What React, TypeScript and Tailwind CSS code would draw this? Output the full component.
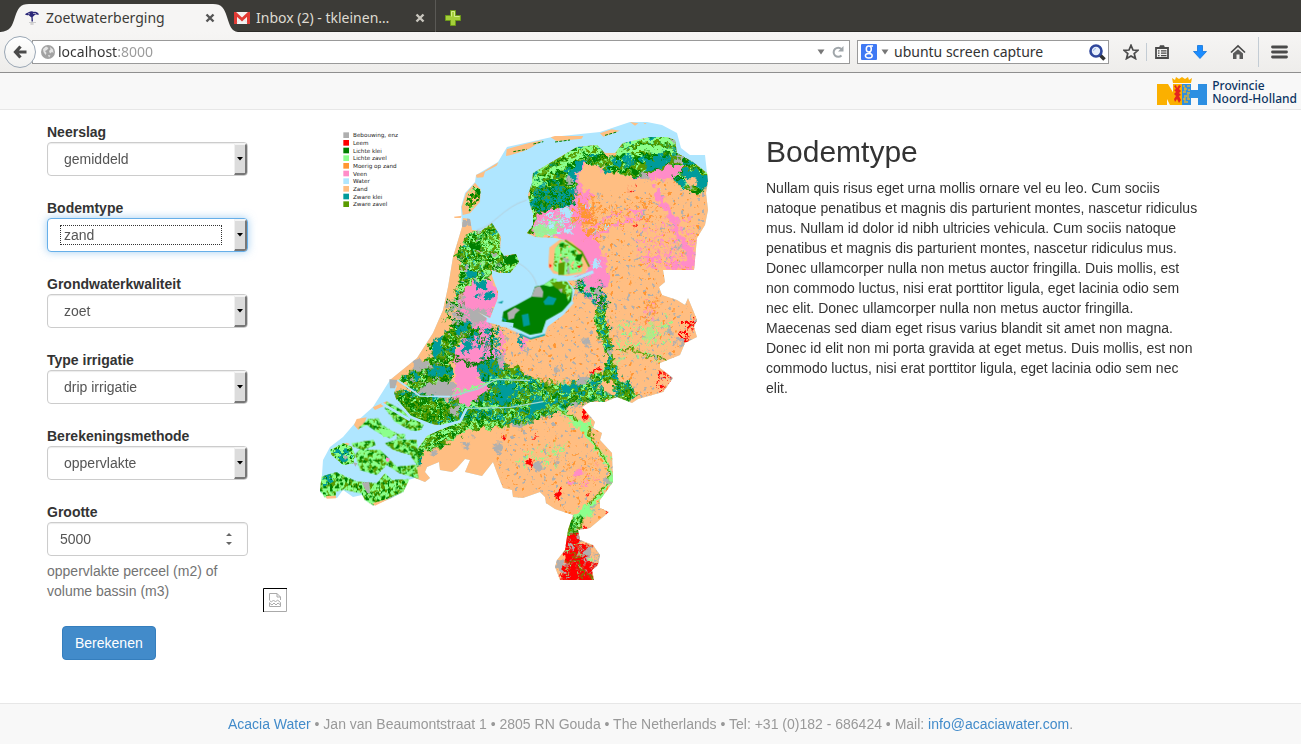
import React from "react";

const C = {
  grey: "#afafaf",
  red: "#ff0000",
  green: "#008000",
  light: "#8cff8c",
  orange: "#ff9632",
  pink: "#ff8cc8",
  water: "#afe6ff",
  sand: "#ffbe82",
  teal: "#009b9b",
  olive: "#5a9b00",
};

const legend = [
  ["Bebouwing, enz", C.grey],
  ["Leem", C.red],
  ["Lichte klei", C.green],
  ["Lichte zavel", C.light],
  ["Moerig op zand", C.orange],
  ["Veen", C.pink],
  ["Water", C.water],
  ["Zand", C.sand],
  ["Zware klei", C.teal],
  ["Zware zavel", C.olive],
];

/* Noise masks: [id, frequency, octaves, seed, threshold] */
const noises: [string, string, number, number, number][] = [
  ["n-a", "0.08", 3, 3, 0.5],
  ["n-b", "0.09", 3, 11, 0.55],
  ["n-c", "0.08", 3, 27, 0.57],
  ["n-d", "0.1", 2, 41, 0.63],
  ["n-e", "0.07", 2, 58, 0.71],
  ["n-f", "0.03", 3, 73, 0.58],
  ["n-g", "0.02 0.09", 3, 90, 0.52],
  ["n-h", "0.08", 2, 134, 0.69],
];

type Layer = [string, string];

function Patch({ d, base, layers = [] }: { d: string; base?: string; layers?: Layer[] }) {
  return (
    <>
      {base && <path d={d} fill={base} />}
      {layers.map(([fill, noise]) => (
        <path key={fill + noise} d={d} fill={fill} filter={`url(#${noise})`} />
      ))}
    </>
  );
}

const clay: Layer[] = [[C.olive, "n-g"], [C.teal, "n-f"], [C.light, "n-d"]];
const zavel: Layer[] = [[C.olive, "n-a"], [C.green, "n-b"], [C.light, "n-c"]];
const river: Layer[] = [[C.olive, "n-a"], [C.green, "n-c"], [C.light, "n-d"]];
const sandy: Layer[] = [[C.orange, "n-e"], [C.grey, "n-h"]];

const silhouette =
  "M322 475L323 460L330 447L343 437L355 423L373 407L390 380L417 358L433 333L443 310L448 287L453 257L462 227L461 207L465 193L475 182L476 175L498 162L507 147L552 137L600 132L630 122L647 122L662 125L677 133L681 148L690 155L705 155L707 173L708 182L706 193L708 210L705 225L697 238L694 270L663 270L665 282L659 287L662 295L677 300L685 305L688 298L693 310L697 320L694 327L697 337L685 343L680 355L660 363L660 368L673 378L663 392L638 399L632 403L617 397L605 402L590 402L582 407L589 415L595 422L593 428L602 433L600 440L612 453L613 482L600 500L600 508L609 512L590 528L578 530L580 540L593 545L600 555L598 565L592 570L594 580L560 580L555 567L557 560L565 550L568 530L573 515L555 509L546 503L545 497L540 492L523 498L513 497L512 490L503 488L497 473L493 462L482 476L465 472L470 460L465 459L457 468L452 472L440 470L439 462L427 467L425 472L430 478L425 482L415 478L408 480L403 492L390 499L373 505L365 500L362 495L353 497L343 490L337 498L327 497L320 492Z";

const mainland =
  "M532 183L533 173L550 163L577 147L597 145L605 153L615 153L623 143L650 137L667 137L675 140L677 153L693 162L707 173L708 182L706 193L708 210L705 225L697 238L694 270L663 270L665 282L659 287L662 295L677 300L685 305L688 298L693 310L697 320L694 327L697 337L685 343L680 355L660 363L660 368L673 378L663 392L638 399L632 403L617 397L605 402L590 402L582 407L589 415L595 422L593 428L602 433L600 440L612 453L613 482L600 500L600 508L609 512L590 528L578 530L580 540L593 545L600 555L598 565L592 570L594 580L560 580L555 567L557 560L565 550L568 530L573 515L555 509L546 503L545 497L540 492L523 498L513 497L512 490L503 488L497 473L493 462L482 476L465 472L470 460L465 459L457 468L452 472L440 470L439 462L427 467L425 472L430 478L425 482L415 478L417 450L427 436L440 430L458 423L440 425L427 424L410 417L398 404L394 393L397 386L390 380L417 358L433 333L443 310L448 287L453 257L462 227L463 218L470 219L472 230L481 231L492 223L501 237L500 250L504 256L516 254L519 262L510 273L500 273L492 270L492 276L498 292L497 300L490 318L478 312L492 322L502 327L512 325L527 334L542 337L547 327L562 316L572 303L575 290L567 280L583 273L588 270L580 250L566 240L555 238L535 237L527 233L533 225L533 213L530 205L528 195Z";

function SoilMap() {
  return (
    <svg viewBox="-141 0 1464 1434" className="block h-auto w-full" role="img" aria-label="Bodemkaart van Nederland">
      <defs>
        {noises.map(([id, freq, oct, seed, t]) => (
          <filter key={id} id={id} x="0" y="0" width="1" height="1" colorInterpolationFilters="sRGB">
            <feTurbulence type="fractalNoise" baseFrequency={freq} numOctaves={oct} seed={seed} />
            <feColorMatrix values={`0 0 0 0 0  0 0 0 0 0  0 0 0 0 0  14 0 0 0 ${-14 * t + 0.5}`} result="m" />
            <feComposite in="SourceGraphic" in2="m" operator="in" />
          </filter>
        ))}
        <filter id="rough" x="-0.1" y="-0.1" width="1.2" height="1.2" colorInterpolationFilters="sRGB">
          <feTurbulence type="fractalNoise" baseFrequency="0.06" numOctaves={3} seed={6} />
          <feDisplacementMap in="SourceGraphic" scale="36" xChannelSelector="R" yChannelSelector="G" />
        </filter>
        <clipPath id="land">
          <path d={mainland} transform="scale(3) translate(-310 -110)" />
        </clipPath>
      </defs>

      {legend.map(([name, color], i) => (
        <g key={name}>
          <rect x="100" y={67 + i * 23} width="17" height="17" fill={color} />
          <text x="129" y={82 + i * 23} fontSize="17" fontFamily="DejaVu Sans, sans-serif" fill="#222">
            {name}
          </text>
        </g>
      ))}

      <path d={silhouette} fill={C.water} transform="scale(3) translate(-310 -110)" />
      <g transform="scale(3) translate(-310 -110)">
        <path d={mainland} fill={C.sand} />
      </g>
      <g clipPath="url(#land)">
        <Patch d="M560 100H1210V1440H560Z" layers={sandy} />
        <g filter="url(#rough)">
          {/* Friesland and Groningen */}
          <g transform="translate(570 0)">
            <path d="M225 170L290 150L320 200L400 205L520 160L560 170L540 205L470 210L400 225L300 215L265 280L280 330L240 350L300 400L330 500L310 540L200 500L260 470L180 385L80 370L110 310L200 290Z" fill={C.pink} />
            <path d="M270 155L320 190L400 200L340 225L285 260L245 235L230 190ZM320 210L470 205L450 240L310 240Z" fill={C.sand} />
            <Patch d="M110 330L200 290L240 330L210 370L120 385Z" layers={[[C.water, "n-b"], [C.light, "n-d"]]} />
            <path d="M100 350L180 335L170 375L110 385Z" fill={C.light} opacity="0.8" />
            <path d="M145 345L165 342L160 356L145 356ZM195 355L220 350L215 368L192 368ZM185 290L215 300L220 330L190 315ZM270 455L300 450L295 475L275 470ZM465 235L478 232L476 250Z" fill={C.water} />
            <Patch d="M230 250L280 260L290 320L330 330L300 400L240 360Z" layers={[[C.orange, "n-c"], [C.water, "n-e"]]} />
            <Patch d="M210 300L300 290L280 340L200 345Z" layers={[[C.orange, "n-b"]]} />
            <Patch d="M250 300L500 250L480 330L400 340L250 390Z" layers={[[C.orange, "n-d"]]} />
            <Patch d="M380 290L440 295L430 330L380 325Z" layers={[[C.pink, "n-b"]]} />
            <Patch d="M400 330L580 320L590 480L420 480Z" layers={[[C.pink, "n-d"], [C.orange, "n-e"]]} />
            <path d="M460 225L475 235L500 280L530 330L550 380L580 430V480L540 470L565 445L530 380L500 315L465 260Z" fill={C.pink} />
            <Patch d="M430 440L590 390V490L440 470Z" layers={[[C.pink, "n-c"]]} />
            <path d="M240 370L360 305M250 385L390 330M260 400L330 360M350 345L430 320" stroke={C.pink} strokeWidth="6" fill="none" />
            <Patch d="M70 370L85 250L80 170L240 90L300 95L330 150L300 170L250 160L220 180L230 250L215 285L110 310L100 370Z" base={C.green} layers={clay} />
            <path d="M95 220C120 170 170 130 300 105M100 235C150 170 180 185 210 150C240 125 280 120 305 125" stroke={C.light} strokeWidth="12" fill="none" />
            <path d="M110 200C150 150 200 130 300 115M130 220C170 190 200 190 190 240" stroke={C.olive} strokeWidth="5" fill="none" />
            <path d="M105 240L180 225L215 245L225 285L115 305L100 280Z" fill={C.teal} />
            <Patch d="M105 240L180 220L215 240L225 285L115 305L100 280Z" layers={[[C.green, "n-b"], [C.olive, "n-d"]]} />
            <path d="M225 160L270 145L235 180L225 220L205 205Z" fill={C.teal} />
            <Patch d="M310 190L320 130L370 95L450 70H530L560 145L640 180L620 220L600 260L570 240L540 240L520 200L560 170L520 160L450 190L400 205L370 190Z" base={C.green} layers={clay} />
            <path d="M350 125C400 85 450 85 525 95M350 135C410 110 460 110 525 125" stroke={C.light} strokeWidth="13" fill="none" />
            <path d="M370 122C420 95 460 98 525 108" stroke={C.olive} strokeWidth="5" fill="none" />
            <path d="M315 105L345 100L350 135L320 140Z" fill={C.sand} />
            <path d="M435 150L500 140L495 165L440 185ZM555 180L610 185L625 215L600 250L590 210L550 205Z" fill={C.teal} />
            <path d="M555 205L590 205L590 225L560 230Z" fill={C.sand} />
          </g>
          {/* Holland */}
          <g>
            <Patch d="M470 375L520 350L560 340L580 430L640 430L630 460L600 500L540 480V520L470 520L430 600L400 640L440 550L450 470L435 430Z" base={C.green} layers={[[C.olive, "n-a"], [C.light, "n-b"], [C.teal, "n-h"], [C.grey, "n-e"]]} />
            <path d="M515 365L570 375L570 420L515 430Z" fill={C.light} />
            <Patch d="M515 365L570 375L570 420L515 430Z" layers={[[C.olive, "n-b"], [C.green, "n-d"]]} />
            <path d="M570 440L620 430L625 455L600 465ZM480 400L510 400L505 425L480 420Z" fill={C.green} />
            <path d="M460 530L540 505L570 560L550 600L540 720L500 760L440 770L420 740L470 700L440 600Z" fill={C.pink} />
            <Patch d="M410 570L460 560L470 650L430 680Z" layers={[[C.grey, "n-a"], [C.green, "n-d"]]} />
            <Patch d="M410 570L460 590L560 590L560 640L430 650Z" layers={[[C.grey, "n-b"]]} />
            <path d="M500 510L530 510L525 540L495 545ZM530 545L550 545L540 570L525 565ZM490 555L515 550L505 565ZM470 480L500 485L490 510L470 505Z" fill={C.teal} />
            <path d="M455 330H485L480 350H460ZM480 595L520 600L530 625L500 640L470 615ZM460 470L475 465L475 495L460 492Z" fill={C.grey} />
          </g>
          <g transform="translate(0 570)">
            <Patch d="M400 100L440 60L480 70L510 100L440 130L440 175L420 190L430 240L390 280L330 290L270 240L310 200L370 160L350 140Z" base={C.green} layers={[[C.olive, "n-a"], [C.light, "n-d"], [C.grey, "n-h"], [C.teal, "n-f"]]} />
            <path d="M430 170L460 120L530 100L570 160L500 230L540 270L480 330L410 330L440 240Z" fill={C.pink} />
            <Patch d="M460 100L575 70L580 200L500 220L530 130L460 160Z" layers={[[C.teal, "n-b"], [C.water, "n-d"], [C.green, "n-d"]]} />
            <path d="M430 165L450 180L490 195L540 180L545 80" stroke={C.green} strokeWidth="7" fill="none" />
            <path d="M455 125L480 120L480 155L460 158Z" fill={C.teal} />
            <path d="M300 200L325 172L370 200L330 215ZM330 265L390 240L440 255L420 290L350 300L310 280Z" fill={C.grey} />
            <Patch d="M240 270L330 280L440 300L520 230L660 240L720 250L860 270L900 250L960 240L980 290L900 300L810 310L770 330L640 370L480 380L340 440L330 500L270 480V350Z" base={C.teal} layers={river} />
            <Patch d="M250 280L330 290L430 310L430 350L340 370L260 320Z" base={C.green} layers={[[C.olive, "n-a"], [C.light, "n-d"]]} />
            <path d="M430 265L525 230L535 265L480 318L450 305Z" fill={C.pink} />
            <Patch d="M500 195L570 180L660 230L700 250L640 320L530 320L560 280L510 230Z" base={C.teal} layers={[[C.olive, "n-c"], [C.green, "n-d"]]} />
            <path d="M575 195L620 200L660 240L600 235Z" fill={C.olive} />
            <path d="M430 280L510 260L560 235L680 245L740 275M440 315L540 320L650 325L700 290L800 280L880 300M450 360L520 375L650 355L740 310" stroke={C.light} strokeWidth="7" fill="none" />
            <Patch d="M415 365L640 360L650 375L470 390L430 420L370 450L330 450L300 400Z" base={C.olive} layers={[[C.green, "n-a"], [C.light, "n-b"]]} />
          </g>
          {/* IJssel, Maas and Limburg */}
          <g transform="translate(570 570)">
            <Patch d="M0 190L60 220L150 250L240 245L300 215L320 190L310 130L285 100L290 0L320 -10L325 60L330 130L350 200L360 240L400 300L370 310L340 250L290 260L310 300L220 300L110 340L75 370L0 375Z" base={C.olive} layers={[[C.light, "n-b"], [C.teal, "n-c"], [C.green, "n-d"]]} />
            <path d="M0 255L40 250L50 280L20 310H0ZM190 250L240 250L230 275L190 275ZM270 245L305 235L290 260L270 262ZM100 300L190 300L120 325L75 360Z" fill={C.teal} />
            <path d="M305 245L340 245L350 290L310 275Z" fill={C.sand} />
            <path d="M140 315L200 340L240 370L270 420L320 480L335 540L290 600L240 640" stroke={C.light} strokeWidth="13" fill="none" />
            <path d="M140 315L210 345L260 380L290 440L325 490L325 550L270 610L225 670" stroke={C.olive} strokeWidth="6" fill="none" />
            <path d="M190 365L260 365L285 385L240 385Z" fill={C.light} />
            <path d="M350 155L400 145L440 165L500 180" stroke={C.olive} strokeWidth="6" fill="none" />
            <Patch d="M350 60L520 40L500 190L350 160Z" layers={[[C.light, "n-d"], [C.grey, "n-e"]]} />
            <path d="M455 65L465 100L440 130L430 110ZM350 200L370 170L350 180Z" fill={C.light} opacity="0.6" />
            <Patch d="M440 0L480 0L460 60L400 110L430 50Z" layers={[[C.orange, "n-b"], [C.pink, "n-d"]]} />
            <Patch d="M120 430L200 430L180 500L20 500Z" layers={[[C.light, "n-d"]]} />
            <Patch d="M200 490L300 470L290 560L200 570Z" layers={[[C.orange, "n-d"], [C.pink, "n-e"]]} />
            <path d="M225 510L250 505L245 525L230 530ZM205 550L225 545L215 560Z" fill={C.pink} />
            <path d="M235 630L290 600L280 640L240 660L225 700L205 710L215 650Z" fill={C.light} />
            <Patch d="M185 660L250 650L240 720L200 730Z" layers={[[C.green, "n-a"], [C.olive, "n-b"]]} />
          </g>
          {/* Veluwe edge */}
          <g transform="translate(570 570)">
            <path d="M215 -40L250 -80L290 -60L310 -20L290 20L260 -10Z" fill={C.light} />
            <Patch d="M215 -40L250 -80L300 -60L330 20L290 20L260 -10Z" layers={[[C.green, "n-a"], [C.teal, "n-b"], [C.pink, "n-c"]]} />
            <path d="M250 -60L290 -80L300 -45L260 -35Z" fill={C.pink} />
            <path d="M60 90L85 105L70 130L65 160M0 95L10 120L5 200" stroke={C.pink} strokeWidth="12" fill="none" />
            <path d="M60 100L65 140" stroke={C.teal} strokeWidth="7" />
          </g>
          {/* Loess */}
          <g transform="translate(570 570)">
            <Patch d="M200 700L236 700L240 735L270 732L275 750L260 780L292 800L280 830L285 850H175L195 790L188 765Z" base={C.red} layers={[[C.light, "n-e"], [C.grey, "n-h"]]} />
            <Patch d="M240 745L305 755L300 800L250 790Z" layers={[[C.grey, "n-b"], [C.light, "n-h"]]} />
            <path d="M165 785L190 780V810L175 815ZM205 725L220 735L222 748L203 746ZM228 708L243 720L235 730ZM250 745L275 740L272 765L252 765Z" fill={C.grey} />
            <path d="M195 783L235 788L250 815L240 840M215 760L240 770M260 820L285 840" stroke={C.olive} strokeWidth="4" fill="none" />
            <path d="M245 318L262 320L258 338L268 348L248 358L250 335ZM270 218L295 203L290 218L272 224ZM80 485L100 482L103 498L92 508ZM170 575L186 558L190 578L172 600L168 588ZM100 404L112 408L106 414ZM262 580L276 582L266 590ZM254 685L268 688L258 705ZM315 630L328 628L318 638ZM0 415L15 410L8 422Z" fill={C.red} />
            <Patch d="M470 210L525 225L515 270L480 280L470 240Z" layers={[[C.red, "n-b"]]} />
            <Patch d="M550 50L580 60L575 110L540 130Z" layers={[[C.red, "n-a"]]} />
          </g>
        </g>
        {/* Towns */}
        <g filter="url(#rough)">
          <g transform="translate(570 570)">
            <path d="M100 490L120 490L122 512L104 515ZM230 235L262 230L265 245L240 252ZM250 115L270 112L265 140L248 135ZM525 110L550 120L548 135L530 130ZM495 88L515 82L518 102L498 103ZM160 480L175 480L172 495ZM315 535L330 530V555H315ZM45 370L75 368L70 390L50 390ZM210 310L235 305L240 322L212 325ZM325 150L340 150L340 165L325 168ZM75 150L90 152L85 165L72 160ZM0 175L8 180V200H0ZM15 112L28 115L25 128ZM162 205L180 203L178 222L160 218ZM265 620L285 618L280 635Z" fill={C.grey} />
          </g>
          <g transform="translate(570 0)" fill={C.grey}>
            <path d="M425 188L440 185L450 205L435 215L420 205ZM425 300L440 298L438 318L424 316ZM200 205L222 203L220 216H200ZM285 250L302 248L298 262L286 260ZM405 440L425 436L420 448H407ZM530 400L550 405L540 425L530 418ZM522 135L550 150L545 158L525 148ZM500 80L525 85L522 98ZM285 530L305 535V560H290ZM542 300L556 305L550 320ZM565 225L580 228L572 238Z" />
            <Patch d="M380 220L405 220L400 250L380 245Z" layers={[[C.red, "n-c"]]} />
            <path d="M400 345L410 345L405 352Z" fill={C.red} />
          </g>
          <g transform="translate(0 570)" fill={C.grey}>
            <path d="M550 432L570 430L572 450L560 462L546 448ZM455 430L478 420L480 440L465 448ZM370 450L382 455L376 468L362 465ZM610 372L640 368V385L615 390ZM415 320L445 315L440 350L420 340ZM560 165L580 170L578 205L565 190ZM480 400L498 402L492 412ZM585 118L598 120L592 132Z" />
            <path d="M570 415L588 410L580 422ZM648 488L660 484V496L650 494Z" fill={C.red} />
          </g>
        </g>
      </g>

      {/* Wadden islands */}
      <g fill={C.sand}>
        <path d="M498 195L520 185L565 157L560 167L525 185L520 202L500 203ZM590 118L610 112L660 98L700 90L660 115L640 124L600 136L588 138Z" />
        <path d="M495 218L512 238L510 275L480 310L458 315L455 290L468 250Z" />
        <path d="M432 320L455 317L452 324L434 324Z" />
        <path d="M722 82L735 78L820 78L815 86L740 94ZM870 70L905 58L930 62L880 80ZM960 36L985 40L975 47ZM1000 38L1010 40L1005 43Z" />
      </g>
      <Patch d="M485 225L512 238L508 275L480 305L465 290L475 250Z" layers={[[C.light, "n-b"], [C.green, "n-c"]]} />
      <Patch d="M500 240L512 245L508 270L480 295L470 285Z" layers={[[C.green, "n-a"], [C.olive, "n-b"]]} />
      <path d="M610 125L650 118M670 102L700 95M735 96L780 90M885 76L920 66" stroke={C.green} strokeWidth="3" strokeDasharray="9 4" />

      {/* Polders */}
      <g transform="translate(570 0)">
        <path d="M148 412L180 388L215 395L245 425L265 470L255 490L200 498L160 490L145 470Z" fill={C.sand} />
        <Patch d="M165 415L185 392L225 410L248 460L245 485L190 495L160 480Z" base={C.light} layers={[[C.olive, "n-d"], [C.sand, "n-h"]]} />
        <path d="M180 400L192 398L190 412L178 410ZM230 435L250 430L240 455L225 450ZM210 425L222 420L225 435Z" fill={C.green} />
        <path d="M175 460L195 455L192 495H175Z" fill={C.olive} />
        <path d="M185 440L210 450L200 460ZM205 462L210 490H200Z" fill={C.grey} />
        <path d="M148 462L155 466L150 474ZM230 468L245 466L238 475Z" fill={C.red} />
        <path d="M195 390L245 425L268 470" stroke={C.olive} strokeWidth="5" fill="none" />
      </g>
      <g transform="translate(570 570)">
        <path d="M130 -45L160 -65L200 -55L217 -30L213 8L185 35L140 62L125 100L90 106L60 92L5 70L10 35L50 15L95 -10L105 -40Z" fill={C.green} />
        <path d="M130 -45L160 -65L200 -55L217 -30L205 5L198 -20L170 -45L150 -40Z" fill={C.light} />
        <Patch d="M130 -45L160 -65L200 -55L217 -30L205 5L170 -45Z" layers={[[C.olive, "n-b"]]} />
        <path d="M150 -55L200 -45L190 -22L165 -38Z" fill={C.olive} />
        <path d="M65 45L85 40L90 75L70 80ZM130 5L145 -12L170 -5L160 15L135 15ZM5 50L20 60L15 68Z" fill={C.teal} />
        <path d="M95 -10L105 -38L120 -42L130 -25L128 -8ZM175 -32L188 -35L185 -20ZM22 38L45 22L60 30L46 42L42 55L25 60Z" fill={C.grey} />
        <path d="M5 72L60 96L90 110L130 102L142 65L190 38L218 5" stroke={C.water} strokeWidth="10" fill="none" />
        <path d="M60 102L92 116L135 104" stroke={C.teal} strokeWidth="4" fill="none" />
      </g>

      {/* Zeeland */}
      <g transform="translate(0 570)">
        <path d="M132 375L140 357L170 352L165 365L145 390ZM188 322L230 304L240 310L195 330ZM60 450L110 428L120 432L70 455Z" fill={C.sand} />
        {[
          "M60 450L100 430L125 440L135 465L130 490L100 495L65 465Z",
          "M145 385L175 357L205 355L215 375L260 400L240 415L200 395L170 375Z",
          "M125 430L190 420L197 435L160 450L130 440Z",
          "M135 465L150 448L210 450L240 480L260 500L320 495L325 535L270 520L230 495L200 525L150 510Z",
          "M225 430L260 418L320 420L325 500L300 465L250 450Z",
          "M230 305L300 345L340 375L330 395L300 390L255 365L225 325Z",
          "M260 402L285 402L285 415H262Z",
          "M35 530L80 517L140 545L200 550L225 520L245 540L298 537L280 575L190 615L165 600L155 580L100 568L78 575L75 592H45L30 572Z",
        ].map((d) => (
          <Patch key={d} d={d} base={C.light} layers={zavel} />
        ))}
        <Patch d="M62 450L110 445L130 470L100 490Z" layers={[[C.teal, "n-a"]]} />
        <Patch d="M35 530L60 522L70 545L40 560Z" layers={[[C.teal, "n-a"]]} />
        <path d="M205 385L240 390L258 402L220 412Z" fill={C.light} />
        <path d="M155 548L178 545L180 580L172 580ZM98 465L115 470L105 480ZM130 487L142 490L136 500ZM238 238L262 240L255 265H240Z" fill={C.grey} />
        <path d="M228 472L240 476L235 486L228 484Z" fill={C.pink} />
        <path d="M48 588L78 587V595L50 596ZM188 610L255 590L235 598L195 617Z" fill={C.sand} />
        <path d="M258 300L300 350L380 382L450 365L470 325M342 392L290 405M215 310L300 360" stroke={C.water} strokeWidth="8" fill="none" />
        <path d="M262 240L330 288L420 290" stroke={C.water} strokeWidth="5" fill="none" />
        <path d="M420 290L500 268L560 238L660 242M470 325L600 322L700 305" stroke="#9ed9cf" strokeWidth="4" fill="none" />
        <path d="M530 60L570 70L610 75" stroke={C.water} strokeWidth="12" fill="none" />
      </g>
      <path d="M500 360C550 350 580 290 650 270M622 458C650 470 675 500 680 525" stroke="#b8c4c8" strokeWidth="2" fill="none" />
      <path d="M740 510L800 505L850 485" stroke={C.water} strokeWidth="10" fill="none" />
      <path d="M562 578L580 572L576 580Z" fill={C.teal} />
    </svg>
  );
}

function Label({ htmlFor, children }: { htmlFor: string; children: React.ReactNode }) {
  return (
    <label htmlFor={htmlFor} className="block leading-5 font-bold">
      {children}
    </label>
  );
}

function SelectField({ id, label, value, active }: { id: string; label: string; value: string; active?: boolean }) {
  return (
    <div>
      <Label htmlFor={id}>{label}</Label>
      <div className="relative">
        <select
          id={id}
          className={
            active
              ? "block h-[34px] w-full appearance-none rounded border border-[#66afe9] bg-white px-4 text-[#555] shadow-[0_0_8px_rgba(102,175,233,0.6)] outline-none"
              : "block h-[34px] w-full appearance-none rounded border border-[#ccc] bg-white px-4 text-[#555] shadow-[inset_0_1px_1px_rgba(0,0,0,0.08)]"
          }
        >
          <option>{value}</option>
        </select>
        {active && (
          <span className="pointer-events-none absolute top-[7px] right-[26px] bottom-[7px] left-[13px] border border-dotted border-[#333]" />
        )}
        <span className="pointer-events-none absolute top-px right-px bottom-px flex w-[13px] items-center justify-center rounded-r-[3px] border-t-2 border-r-2 border-b-2 border-l border-t-[#f4f4f4] border-r-[#777] border-b-[#777] border-l-[#f0f0f0] bg-[#dcdcdc]">
          <svg viewBox="0 0 6 4" className="h-1 w-1.5">
            <path d="M0 0H6L3 3.6Z" fill="#000" />
          </svg>
        </span>
      </div>
    </div>
  );
}

function Close({ color }: { color: string }) {
  return (
    <svg viewBox="0 0 10 10" className="h-[10px] w-[10px]">
      <path d="M1.5 1.5L8.5 8.5M8.5 1.5L1.5 8.5" stroke={color} strokeWidth="2.4" />
    </svg>
  );
}

function Caret() {
  return (
    <svg viewBox="0 0 8 6" className="h-1.5 w-2 shrink-0">
      <path d="M.5 .5H7.500L4 5.500Z" fill="#777" />
    </svg>
  );
}

function Tabs() {
  return (
    <div className="flex h-8 border-b border-[#2b2a27] bg-[#3c3b37] text-sm">
      <div className="relative h-8 w-[238px]">
        <svg viewBox="0 0 238 32" className="absolute inset-0 h-8 w-full" preserveAspectRatio="none">
          <path d="M0 32C11 31 12 26 15 17C18 8 20 4 29 4H213C222 4 224 8 227 17C230 26 231 31 238 32Z" fill="#f6f5f4" />
        </svg>
        <div className="relative flex h-8 items-center pt-1 pr-[23px] pl-6 text-[#3c3b37]">
          <svg viewBox="0 0 16 16" className="mr-1.5 h-4 w-4">
            <path d="M1 4.500C2 2.500 4 3 5 2C7 .8 9 1.500 10 2C12 1.500 14 2.500 15 4.500C13 5 12.500 4.300 11 4.800L8.700 7L9 11.500H7.500L7.400 7.500L4.500 5C3 5.500 2 5 1 4.500Z" fill="#2b2878" />
            <path d="M5 12.500H12M6 14H10M8 12V15" stroke="#bbb" strokeWidth=".7" />
            <path d="M4 3.800H6M9 3.500H12" stroke="#f6f5f4" strokeWidth=".6" />
          </svg>
          <span className="flex-1">Zoetwaterberging</span>
          <button aria-label="Tabblad sluiten"><Close color="#555" /></button>
        </div>
      </div>
      <div className="flex h-8 w-[198px] items-center border-r border-[#5a5955] pt-1 pr-2.5 text-[#dfdbd2]">
        <svg viewBox="0 0 16 12" className="mr-1.5 ml-[-4px] h-3 w-4 shrink-0">
          <rect width="16" height="12" rx="1" fill="#f3f3f3" />
          <path d="M1.500 12V1.500L8 7.500L14.500 1.500V12" fill="none" stroke="#e03a34" strokeWidth="3" />
          <path d="M3 11L6 7M13 11L10 7" stroke="#ddd" strokeWidth=".8" />
        </svg>
        <span className="flex-1 whitespace-nowrap">Inbox (2) - tkleinen…</span>
        <button aria-label="Tabblad sluiten"><Close color="#c9c6be" /></button>
      </div>
      <button aria-label="Nieuw tabblad" className="ml-[9px] pt-1">
        <svg viewBox="0 0 16 16" className="h-4 w-4">
          <path d="M5.500.5H10.500V5.500H15.500V10.500H10.500V15.500H5.500V10.500H.5V5.500H5.500Z" fill="#a4cf3a" stroke="#6d9a18" />
          <path d="M6.500 6.500V1.500H9.500V6.500H14.500" fill="none" stroke="#d5ee8b" />
        </svg>
      </button>
    </div>
  );
}

function Toolbar() {
  return (
    <div className="flex h-[41px] items-center border-b border-[#8f8f8f] bg-linear-to-b from-[#f6f5f4] to-[#eeedeb] pr-[13px] pl-1 text-sm text-[#333]">
      <button aria-label="Terug" className="z-10 flex h-8 w-8 shrink-0 items-center justify-center rounded-full border border-[#9aa7b5] bg-linear-to-b from-white to-[#f0f0ef]">
        <svg viewBox="0 0 16 16" className="h-4 w-4">
          <path d="M8.500 2.500L3.500 8L8.500 13.500M4 8H14.500" fill="none" stroke="#4a4a4a" strokeWidth="3.200" />
        </svg>
      </button>
      <div className="-ml-1 flex h-6 flex-1 items-center border border-[#999] bg-white pr-1 pl-2">
        <svg viewBox="0 0 14 14" className="h-3.5 w-3.5 shrink-0">
          <circle cx="7" cy="7" r="7" fill="#a2a2a2" />
          <path d="M2 4L5 1.500L7.500 3L6 5L4 6L5.500 8L4.500 10L2.500 7ZM9 2L12 4.500L12.500 8L11 7L9 8.500L8 6L9.500 4.500ZM7 10L9.500 10.500L8 12.500Z" fill="#e4e4e4" />
        </svg>
        <input
          aria-label="Adres"
          defaultValue="localhost:8000"
          className="ml-[3px] min-w-0 flex-1 bg-[linear-gradient(90deg,#333_60px,#999_60px)] bg-clip-text text-transparent outline-none"
        />
        <Caret />
        <button aria-label="Vernieuwen" className="ml-1.5">
          <svg viewBox="0 0 14 14" className="h-3.5 w-3.5">
            <path d="M10.500 10.500A4.600 4.600 0 1 1 10.500 4" fill="none" stroke="#a0a6aa" strokeWidth="2" />
            <path d="M12.500 1V6.500H7Z" fill="#a0a6aa" />
          </svg>
        </button>
      </div>
      <div className="ml-[7px] flex h-6 w-[252px] items-center border border-[#999] bg-white pr-0.5 pl-[3px]">
        <svg viewBox="0 0 16 16" className="h-4 w-4 shrink-0">
          <rect width="16" height="16" rx="1" fill="#3f79f4" />
          <ellipse cx="7.800" cy="5" rx="2.500" ry="3" fill="none" stroke="#fff" strokeWidth="1.500" />
          <ellipse cx="7.800" cy="11.800" rx="3.400" ry="2.300" fill="none" stroke="#fff" strokeWidth="1.500" />
          <path d="M9 2H12M8 7.500L9.500 9.500" stroke="#fff" strokeWidth="1.300" />
        </svg>
        <span className="ml-1 flex"><Caret /></span>
        <input aria-label="Zoeken" defaultValue="ubuntu screen capture" className="ml-[5px] min-w-0 flex-1 outline-none" />
        <svg viewBox="0 0 17 17" className="h-[17px] w-[17px] shrink-0">
          <path d="M11 11L15.500 15.500" stroke="#333" strokeWidth="3.600" />
          <circle cx="7" cy="7" r="5.500" fill="#e6eefb" stroke="#2f479c" strokeWidth="2.600" />
          <path d="M4.500 7A2.500 2.500 0 0 1 7 4.500" stroke="#9cb8e8" fill="none" />
        </svg>
      </div>
      <button aria-label="Bladwijzer" className="ml-3.5">
        <svg viewBox="0 0 16 16" className="h-4 w-4">
          <path d="M8 1.300L10 6L15 6.300L11.200 9.500L12.500 14.600L8 11.900L3.500 14.600L4.800 9.500L1 6.300L6 6Z" fill="none" stroke="#4a4a4a" strokeWidth="1.700" />
        </svg>
      </button>
      <span className="ml-[7px] h-[18px] w-px bg-[#c3ccd4]" />
      <button aria-label="Bladwijzers tonen" className="ml-2">
        <svg viewBox="0 0 14 16" className="h-4 w-3.5">
          <path d="M1 4H13V14H1Z" fill="none" stroke="#4a4a4a" strokeWidth="1.800" />
          <path d="M4 3.500L5 1.200H9L10 3.500Z" fill="#4a4a4a" />
          <path d="M3 6.800H4.500M6 6.800H11.500M3 9.200H4.500M6 9.200H11.500M3 11.600H4.500M6 11.600H11.500" stroke="#4a4a4a" strokeWidth="1.200" />
        </svg>
      </button>
      <button aria-label="Downloads" className="ml-6">
        <svg viewBox="0 0 14 14" className="h-3.5 w-3.5">
          <path d="M4.500.5H9.500V6.500H13.500L7 13.500L.5 6.500H4.500Z" fill="#1a8cff" stroke="#1273d8" strokeWidth=".8" />
        </svg>
      </button>
      <button aria-label="Startpagina" className="ml-[23px]">
        <svg viewBox="0 0 16 16" className="h-4 w-4">
          <path d="M1 8.500L8 2L15 8.500" fill="none" stroke="#4a4a4a" strokeWidth="1.700" />
          <path d="M3 9.500L8 5.200L13 9.500V15H9.500V10.500H6.500V15H3Z" fill="#5a5a5a" />
        </svg>
      </button>
      <span className="ml-3 h-[30px] w-px bg-[#c3ccd4]" />
      <button aria-label="Menu" className="ml-3">
        <svg viewBox="0 0 17 14" className="h-3.5 w-[17px]">
          <path d="M1.500 2H15.500M1.500 7H15.500M1.500 12H15.500" stroke="#4a4a4a" strokeWidth="2.800" strokeLinecap="round" />
        </svg>
      </button>
    </div>
  );
}

function Logo() {
  return (
    <div className="flex items-end gap-[5px] font-['Noto_Sans',sans-serif] text-xs leading-[13px] font-medium text-[#0d3563]">
      <svg viewBox="0 0 50 28" className="h-7 w-[50px]">
        <path d="M0 7H11L17 17V7H25V28H13L10 22V28H0Z" fill="#fbb000" />
        <path d="M25 7H34V13H41V7H50V28H41V21H34V28H25Z" fill="#2d8fe2" />
        <path d="M16 6L15 1L18 3L19 0L22 2L25 0L28 2L31 0L32 3L35 1L34 6Z" fill="#fbb000" />
        <path d="M16 7H25V28H20L16 22Z" fill="#fbb000" />
        <path d="M17 9L19 8L20 11L22 8L24 9L22 12L24 14L22 16L24 18L22 19L24 23L22 26L20 22L18 25L17 22L19 19L17 17L19 15L17 13L19 12Z" fill="#e4261f" />
        <path d="M26 9H28M30 9H33M27 12H30M31 13H33M26 15H29M30 16H33M27 19H30M26 22H28M30 22H33M27 25H31M28 10V14M31 17V21M28 20V24" stroke="#d9b23a" strokeWidth="1.300" />
      </svg>
      <div>
        <div>Provincie</div>
        <div>Noord-Holland</div>
      </div>
    </div>
  );
}

export default function App() {
  return (
    <div className="flex min-h-screen flex-col bg-white font-['Liberation_Sans',Arial,sans-serif] text-sm text-[#333]">
      <header className="font-['Noto_Sans',sans-serif]">
        <Tabs />
        <Toolbar />
      </header>
      <nav className="flex h-[37px] items-end justify-end border-b border-[#e7e7e7] bg-[#f8f8f8] pr-1 pb-1">
        <Logo />
      </nav>
      <main className="grid flex-1 grid-cols-[201px_minmax(0,1fr)_435px] gap-x-[15px] pr-[100px] pb-10 pl-[47px]">
        <form className="pt-3" onSubmit={(e) => e.preventDefault()}>
          <div className="flex flex-col gap-[22px]">
            <SelectField id="neerslag" label="Neerslag" value="gemiddeld" />
            <SelectField id="bodemtype" label="Bodemtype" value="zand" active />
            <SelectField id="grondwater" label="Grondwaterkwaliteit" value="zoet" />
            <SelectField id="irrigatie" label="Type irrigatie" value="drip irrigatie" />
            <SelectField id="methode" label="Berekeningsmethode" value="oppervlakte" />
            <div>
              <Label htmlFor="grootte">Grootte</Label>
              <div className="relative">
                <input
                  id="grootte"
                  type="number"
                  defaultValue={5000}
                  className="block h-[34px] w-full rounded border border-[#ccc] px-3 text-[#555] shadow-[inset_0_1px_1px_rgba(0,0,0,0.08)] [appearance:textfield] [&::-webkit-inner-spin-button]:appearance-none"
                />
                <svg viewBox="0 0 6 12" className="pointer-events-none absolute top-[11px] right-4 h-3 w-1.5">
                  <path d="M0 3L3 0L6 3ZM0 9L3 12L6 9Z" fill="#666" />
                </svg>
              </div>
              <p className="mt-[5px] leading-5 text-[#737373]">oppervlakte perceel (m2) of volume bassin (m3)</p>
            </div>
          </div>
          <button className="mt-[25px] ml-[15px] h-[34px] rounded border border-[#357ebd] bg-[#428bca] px-3 text-white">
            Berekenen
          </button>
        </form>
        <figure>
          <SoilMap />
          <svg viewBox="0 0 24 24" className="block h-6 w-6">
            <path d="M.5 24V.5H24" fill="none" stroke="#000" />
            <path d="M23.500 1V23.500H1" fill="none" stroke="#aaa" />
            <path d="M6.500 12V5.500H14L17.500 9V12M14 5.500V9H17.500M6.500 14.500V18.500H17.500V14.500M6.500 12.500L8.500 14L10.500 12L12.500 14L14.500 12L17.500 14.500M6.500 15L9 17L11 15L13 17L15 15L17.500 17" fill="none" stroke="#aaa" />
          </svg>
        </figure>
        <article className="pt-[25px]">
          <h2 className="mb-2.5 text-3xl leading-[33px]">Bodemtype</h2>
          <p className="leading-5">
            Nullam quis risus eget urna mollis ornare vel eu leo. Cum sociis natoque penatibus et magnis dis parturient
            montes, nascetur ridiculus mus. Nullam id dolor id nibh ultricies vehicula. Cum sociis natoque penatibus et
            magnis dis parturient montes, nascetur ridiculus mus. Donec ullamcorper nulla non metus auctor fringilla.
            Duis mollis, est non commodo luctus, nisi erat porttitor ligula, eget lacinia odio sem nec elit. Donec
            ullamcorper nulla non metus auctor fringilla. Maecenas sed diam eget risus varius blandit sit amet non
            magna. Donec id elit non mi porta gravida at eget metus. Duis mollis, est non commodo luctus, nisi erat
            porttitor ligula, eget lacinia odio sem nec elit.
          </p>
        </article>
      </main>
      <footer className="flex h-[41px] items-center justify-center border-t border-[#e7e7e7] bg-[#f8f8f8] text-[#999]">
        <p>
          <a href="#acacia" className="text-[#428bca]">Acacia Water</a> • Jan van Beaumontstraat 1 • 2805 RN Gouda • The
          Netherlands • Tel: +31 (0)182 - 686424 • Mail:{" "}
          <a href="mailto:info@acaciawater.com" className="text-[#428bca]">info@acaciawater.com</a>.
        </p>
      </footer>
    </div>
  );
}
